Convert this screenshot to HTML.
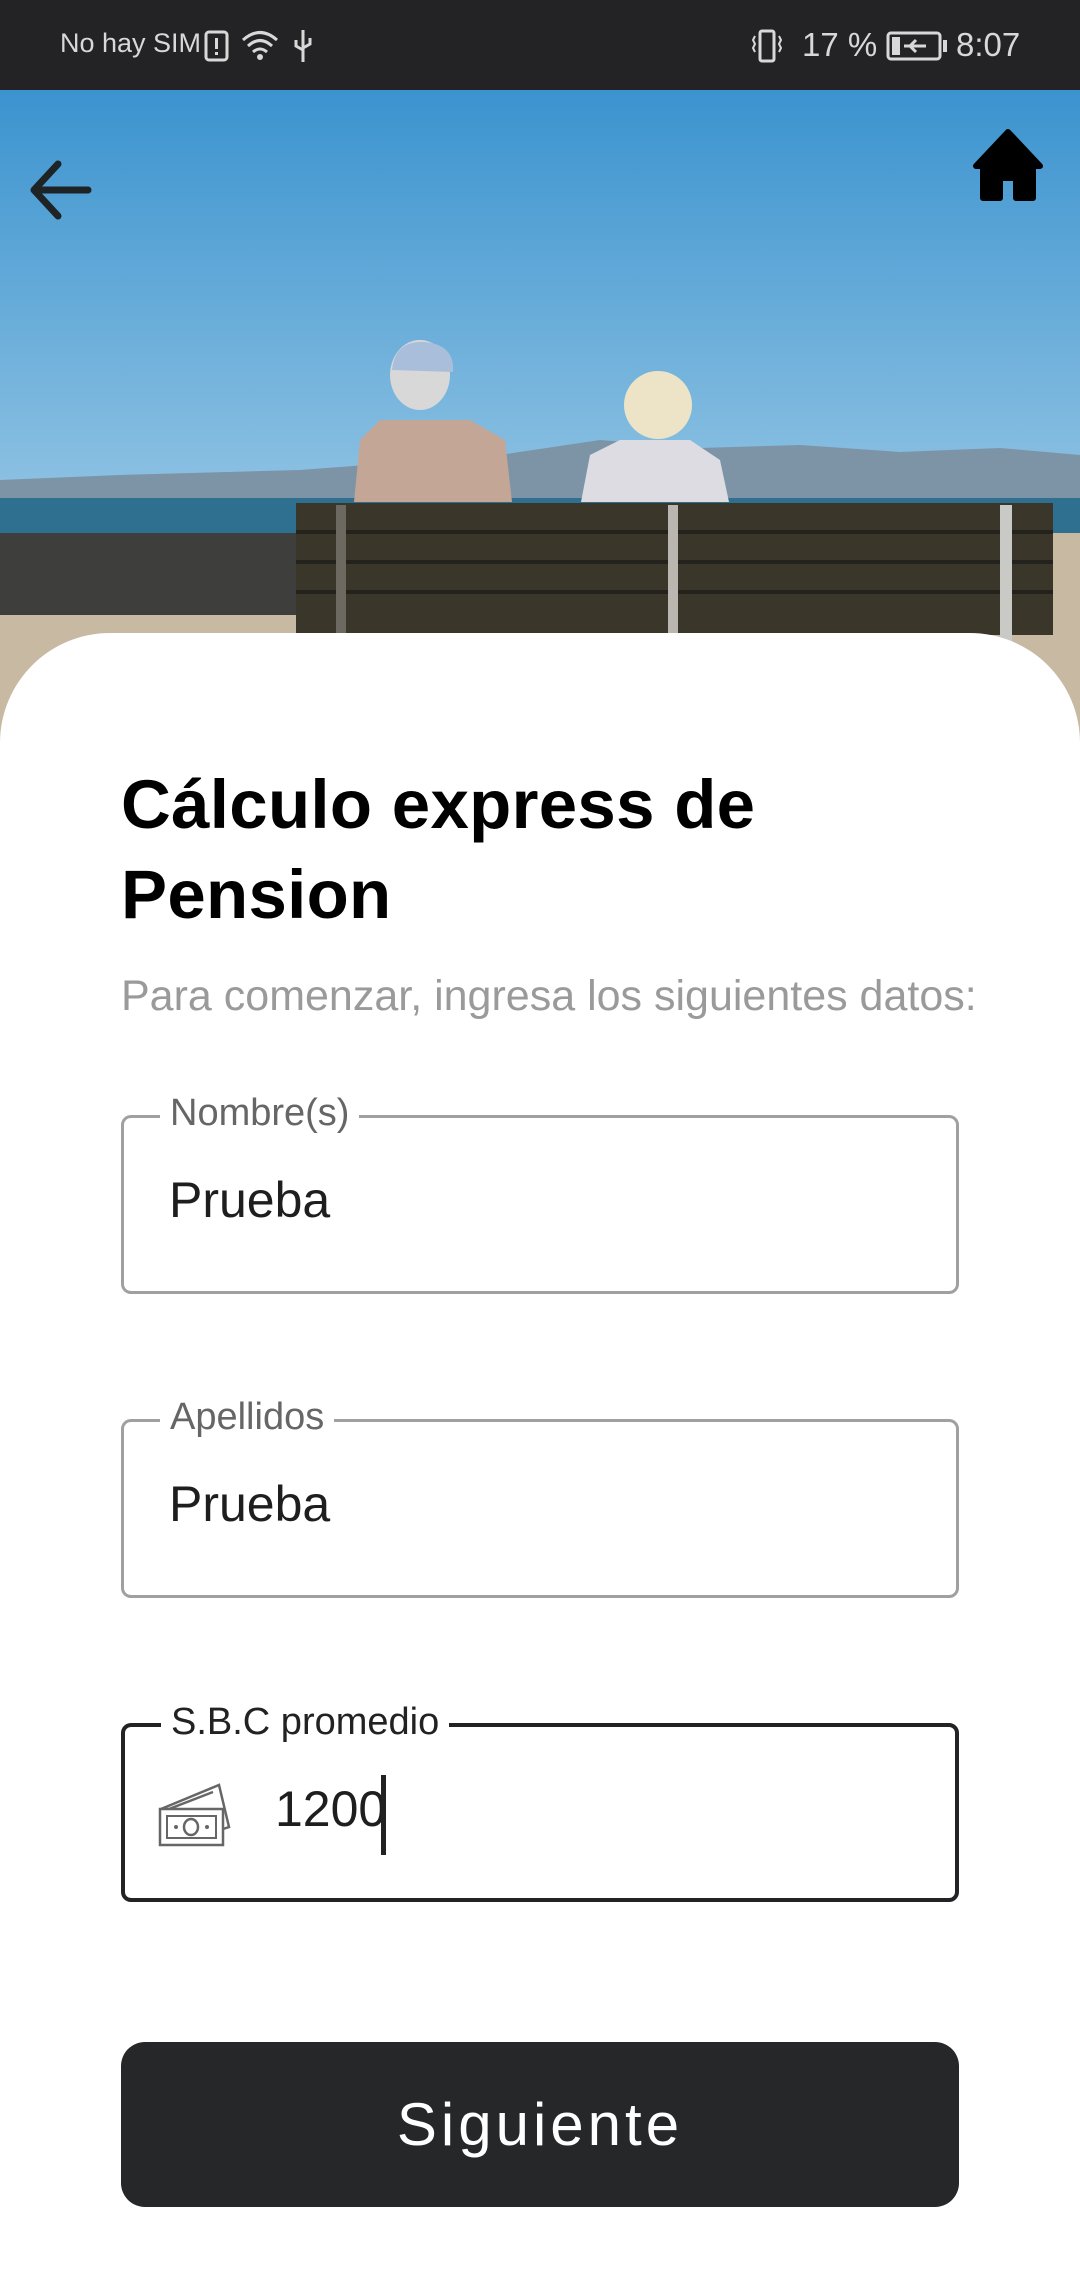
<!DOCTYPE html>
<html><head><meta charset="utf-8"><style>
*{margin:0;padding:0;box-sizing:border-box}
body{width:1080px;height:2280px;overflow:hidden;background:#fff;font-family:"Liberation Sans",sans-serif;position:relative}
.sb{position:absolute;left:0;top:0;width:1080px;height:90px;background:#232325;color:#d8d8d8;font-size:28px}
.abs{position:absolute}
.card{position:absolute;left:0;top:633px;width:1080px;height:1647px;background:#fff;border-radius:110px 110px 0 0}
.title{left:121px;top:760px;font-size:69px;font-weight:bold;line-height:90px;color:#000;letter-spacing:0.3px}
.sub{left:121px;top:972px;font-size:43px;color:#9a9a9a}
.field{position:absolute;left:121px;width:838px;height:179px;border:3px solid #a0a0a0;border-radius:10px}
.lab{position:absolute;left:36px;top:-28px;background:#fff;padding:0 10px;font-size:38px;color:#666;line-height:46px}
.val{position:absolute;left:45px;top:53px;font-size:50px;color:#1e1e1e}
.btn{position:absolute;left:121px;top:2042px;width:838px;height:165px;background:#262729;border-radius:24px;color:#fff;font-size:60px;text-align:center;line-height:165px;letter-spacing:4px}
</style></head><body>
<svg class="abs" style="left:0;top:90px" width="1080" height="680" viewBox="0 90 1080 680">
<defs><linearGradient id="sky" x1="0" y1="0" x2="0" y2="1"><stop offset="0" stop-color="#3b93cf"/><stop offset="1" stop-color="#90c3e3"/></linearGradient></defs>
<rect x="0" y="90" width="1080" height="420" fill="url(#sky)"/>
<path d="M0 480 L120 475 L300 470 L500 455 L600 440 L700 448 L800 445 L900 452 L1000 448 L1080 455 L1080 510 L0 510Z" fill="#7d93a6"/>
<rect x="0" y="498" width="1080" height="36" fill="#2f6f8f"/>
<rect x="0" y="533" width="1080" height="100" fill="#3e3f3d"/>
<rect x="0" y="615" width="1080" height="160" fill="#c8b9a2"/>
<rect x="1040" y="533" width="40" height="100" fill="#c8b9a2"/>
<path d="M354 502 L360 440 L380 420 L470 420 L505 440 L512 502Z" fill="#c3a696"/>
<ellipse cx="420" cy="375" rx="30" ry="35" fill="#d8d8d8"/>
<path d="M392 370 Q395 340 425 342 Q455 345 453 372Z" fill="#a9bedb"/>
<path d="M581 502 L590 455 L620 440 L690 440 L720 460 L729 502Z" fill="#dcdce2"/>
<ellipse cx="658" cy="405" rx="34" ry="34" fill="#ede4c8"/>
<rect x="296" y="503" width="757" height="132" fill="#3a3629"/>
<rect x="296" y="530" width="757" height="4" fill="#24221c"/>
<rect x="296" y="560" width="757" height="4" fill="#24221c"/>
<rect x="296" y="590" width="757" height="4" fill="#24221c"/>
<rect x="336" y="505" width="10" height="130" fill="#6c6a60"/>
<rect x="668" y="505" width="10" height="130" fill="#b9b7b0"/>
<rect x="1000" y="505" width="12" height="160" fill="#c9c9c6"/>
</svg>
<svg class="abs" style="left:28px;top:160px" width="64" height="60" viewBox="0 0 64 60"><path d="M30 4 L6 30 L30 56 M6 30 L60 30" stroke="#1e2326" stroke-width="7" fill="none" stroke-linecap="round" stroke-linejoin="round"/></svg>
<svg class="abs" style="left:970px;top:128px" width="76" height="74" viewBox="0 0 76 74"><path d="M38 4 L70 38 L63 38 L63 70 L46 70 L46 50 L30 50 L30 70 L13 70 L13 38 L6 38Z" fill="#000" stroke="#000" stroke-width="6" stroke-linejoin="round"/></svg>
<div class="sb">
<span class="abs" style="left:60px;top:28px;font-size:27px">No hay SIM</span>
<svg class="abs" style="left:204px;top:30px" width="26" height="32"><rect x="2" y="2" width="21" height="28" rx="3" fill="none" stroke="#d8d8d8" stroke-width="3"/><rect x="11" y="8" width="3" height="11" fill="#d8d8d8"/><rect x="11" y="22" width="3" height="3" fill="#d8d8d8"/></svg>
<svg class="abs" style="left:240px;top:28px" width="40" height="34"><path d="M3 12 Q20 -3 37 12 M8 18 Q20 7 32 18 M13 24 Q20 18 27 24" stroke="#d8d8d8" stroke-width="3" fill="none"/><circle cx="20" cy="29" r="3" fill="#d8d8d8"/></svg>
<svg class="abs" style="left:292px;top:28px" width="22" height="36"><path d="M11 2 L11 34 M4 12 L4 18 L11 22 M18 10 L18 16 L11 20" stroke="#d8d8d8" stroke-width="3" fill="none"/></svg>
<svg class="abs" style="left:752px;top:28px" width="30" height="36"><rect x="8" y="3" width="14" height="30" rx="2" fill="none" stroke="#d8d8d8" stroke-width="3"/><path d="M3 8 L1 12 L3 16 L1 20 L3 24 M27 8 L29 12 L27 16 L29 20 L27 24" stroke="#d8d8d8" stroke-width="2" fill="none"/></svg>
<span class="abs" style="left:802px;top:26px;font-size:33px">17 %</span>
<svg class="abs" style="left:886px;top:30px" width="62" height="32"><rect x="2" y="3" width="52" height="26" rx="3" fill="none" stroke="#d8d8d8" stroke-width="3"/><rect x="57" y="10" width="4" height="12" fill="#d8d8d8"/><rect x="6" y="7" width="8" height="18" fill="#d8d8d8"/><path d="M18 16 L40 16 M30 10 L24 16 L30 22" stroke="#d8d8d8" stroke-width="3" fill="none"/></svg>
<span class="abs" style="left:956px;top:26px;font-size:33px">8:07</span>
</div>
<div class="card"></div>
<div class="abs title">Cálculo express de<br>Pension</div>
<div class="abs sub">Para comenzar, ingresa los siguientes datos:</div>
<div class="field" style="top:1115px"><div class="lab">Nombre(s)</div><div class="val">Prueba</div></div>
<div class="field" style="top:1419px"><div class="lab">Apellidos</div><div class="val">Prueba</div></div>
<div class="field" style="top:1723px;border:4px solid #232325"><div class="lab" style="color:#222">S.B.C promedio</div>
<svg class="abs" style="left:32px;top:56px" width="76" height="66" viewBox="0 0 76 66"><path d="M4 26 L62 2 L72 44 L66 46" stroke="#666" stroke-width="2.5" fill="none"/><path d="M12 26 L56 9" stroke="#666" stroke-width="2.5"/><rect x="3" y="26" width="63" height="36" fill="#fff" stroke="#666" stroke-width="2.5"/><path d="M10 33 L59 33 L59 55 L10 55Z" fill="none" stroke="#666" stroke-width="2"/><ellipse cx="34" cy="44" rx="7" ry="8" fill="none" stroke="#666" stroke-width="2.5"/><circle cx="19" cy="44" r="2" fill="#666"/><circle cx="50" cy="44" r="2" fill="#666"/></svg>
<div class="val" style="left:150px;top:53px">1200</div>
<div class="abs" style="left:256px;top:48px;width:5px;height:80px;background:#222"></div>
</div>
<div class="btn">Siguiente</div>
</body></html>
